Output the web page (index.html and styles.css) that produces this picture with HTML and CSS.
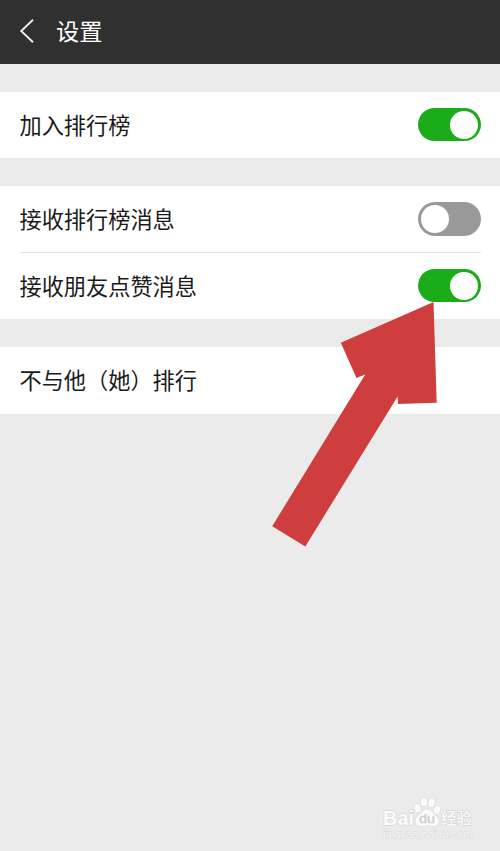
FILE: index.html
```html
<!DOCTYPE html>
<html lang="zh-CN">
<head>
<meta charset="utf-8">
<title>设置</title>
<link rel="stylesheet" href="styles.css">
</head>
<body>
<div class="screen">
  <header class="header">
    <svg class="back" width="16" height="26" viewBox="0 0 16 26"><path d="M14 1.700 2.200 13 14 24.300"/></svg>
    <h1 class="title">设置</h1>
  </header>
  <main class="settings">
    <section class="group">
      <div class="row"><span class="label">加入排行榜</span><span class="toggle on"><i class="knob"></i></span></div>
    </section>
    <section class="group">
      <div class="row divided"><span class="label">接收排行榜消息</span><span class="toggle"><i class="knob"></i></span></div>
      <div class="row"><span class="label">接收朋友点赞消息</span><span class="toggle on"><i class="knob"></i></span></div>
    </section>
    <section class="group">
      <div class="row"><span class="label">不与他（她）排行</span></div>
    </section>
  </main>
  <svg class="arrow" width="170" height="250" viewBox="270 300 170 250"><path d="M433.500 302 436.700 402.700 398 403.900 397.600 396.500 305.300 546.500 272.200 526.200 365.200 374.500 356.500 378 340.800 342.800Z"/></svg>
  <svg class="watermark" width="100" height="54" viewBox="380 792 100 54">
    <g class="mark">
      <ellipse cx="417.700" cy="808.300" rx="3.200" ry="4.300" transform="rotate(-12 417.700 808.300)"/>
      <ellipse cx="424" cy="802" rx="3.200" ry="4.500"/>
      <ellipse cx="431.500" cy="802.700" rx="3.200" ry="4.500" transform="rotate(10 431.500 802.700)"/>
      <ellipse cx="437" cy="810" rx="3.200" ry="4.200" transform="rotate(12 437 810)"/>
      <path d="M427 809.300c4 0 5.500 3.700 8.500 6 5 4 4.500 10.300-1 10.700-3 .2-4.500-.6-7.500-.6s-4.500.8-7.500.6c-5.500-.4-5.500-7-.8-10.700 3-2.300 4.300-6 8.300-6Z"/>
      <text class="bai" x="383" y="825.300" textLength="31" lengthAdjust="spacingAndGlyphs">Bai</text>
      <text class="du" x="419" y="823.300" textLength="16" lengthAdjust="spacingAndGlyphs">du</text>
      <text class="jingyan" x="441" y="824" textLength="31">经验</text>
    </g>
    <text class="site" x="383.500" y="837.500" textLength="89" lengthAdjust="spacingAndGlyphs">jingyan.baidu.com</text>
  </svg>
</div>
</body>
</html>
```
FILE: styles.css
```css
* { box-sizing: border-box; }

body {
  margin: 0;
  background: #ebebeb;
  font-family: "Noto Sans CJK SC", sans-serif;
  color: #1a1a1a;
}

.screen {
  position: relative;
  height: 851px;
  overflow: hidden;
}

.header {
  display: flex;
  align-items: center;
  height: 64px;
  padding: 0 19px 2px;
  background: #303030;
}

.back {
  fill: none;
  stroke: #eee;
  stroke-width: 1.900;
}

.title {
  margin: 0 0 2px 21px;
  color: #fff;
  font-size: 23.200px;
  font-weight: 400;
  line-height: 34px;
}

.settings {
  display: flex;
  flex-direction: column;
  gap: 27.700px;
  padding-top: 27.700px;
}

.group { background: #fff; }

.row {
  display: flex;
  align-items: center;
  justify-content: space-between;
  height: 66.700px;
  margin: 0 19.500px;
  font-size: 22.200px;
  line-height: 32px;
}

.label { padding-bottom: 2px; }

.divided {
  box-shadow: 0 1px 0 -1px #e5e5e5, inset 0 -1px 0 #e5e5e5;
}

.toggle {
  display: flex;
  width: 62.500px;
  height: 33.300px;
  margin-bottom: 0.600px;
  padding: 2.600px;
  border-radius: 17px;
  background: #999;
}

.on {
  justify-content: flex-end;
  background: #1aad19;
}

.knob {
  width: 28.100px;
  height: 28.100px;
  border-radius: 50%;
  background: #fff;
}

.arrow {
  position: absolute;
  left: 270px;
  top: 300px;
  fill: #cf3e3e;
}

.watermark {
  position: absolute;
  left: 380px;
  top: 792px;
}

.mark {
  fill: #fbfbfb;
  stroke: #d6d6d6;
  stroke-width: 1.300px;
  paint-order: stroke;
}

.bai, .du {
  font-family: "Liberation Sans", sans-serif;
  font-weight: 700;
}

.bai { font-size: 19.500px; }

.du {
  font-size: 13.500px;
  font-weight: 400;
  fill: #cfcfcf;
  stroke: #d6d6d6;
  stroke-width: 0.500px;
}

.jingyan {
  font-size: 15.500px;
  font-weight: 500;
}

.site {
  font-family: "Liberation Sans", sans-serif;
  font-size: 10px;
  fill: #f6f6f6;
  stroke: #dadada;
  stroke-width: 0.900px;
  paint-order: stroke;
}
```
